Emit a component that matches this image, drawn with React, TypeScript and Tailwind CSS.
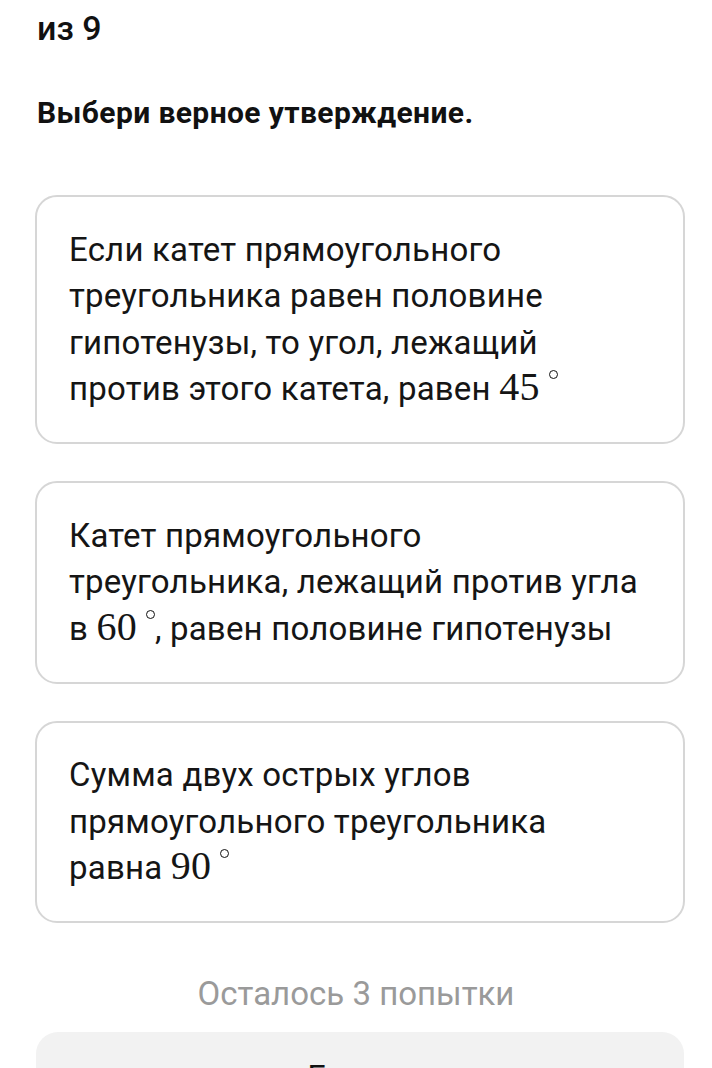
import React from "react";

function Deg() {
  return (
    <span className="inline-block w-[9px] h-[9px] rounded-full border-[1.5px] border-[#111] ml-[9px] relative top-[-21px]" />
  );
}

function M({ children }: { children: React.ReactNode }) {
  return (
    <span className="whitespace-nowrap">
      <span className="text-[40px] leading-[30px]" style={{ fontFamily: '"Liberation Serif", "DejaVu Serif", serif' }}>
        {children}
      </span>
      <Deg />
    </span>
  );
}

function Card({ children }: { children: React.ReactNode }) {
  return (
    <div className="rounded-[22px] border-2 border-[#d6d6d6] bg-white px-[32px] py-[29.5px] text-[33px] leading-[46.5px] tracking-[0.2px] text-[#151515]">
      {children}
    </div>
  );
}

export default function App() {
  return (
    <div
      className="w-[712px] h-[1068px] overflow-hidden bg-white text-[#111]"
      style={{ fontFamily: 'Roboto, "Noto Sans", sans-serif' }}
    >
      <div className="px-[37px] pt-[8px] text-[34px] leading-[40px] font-medium">из 9</div>
      <div className="px-[37px] mt-[47px] text-[30px] leading-[36px] font-bold tracking-[0.4px]">Выбери верное утверждение.</div>

      <div className="pl-[35px] pr-[27px] mt-[64px] flex flex-col gap-[37px]">
        <Card>
          <div>Если катет прямоугольного</div>
          <div>треугольника равен половине</div>
          <div>гипотенузы, то угол, лежащий</div>
          <div>
            против этого катета, равен <M>45</M>
          </div>
        </Card>
        <Card>
          <div>Катет прямоугольного</div>
          <div>треугольника, лежащий против угла</div>
          <div>
            в <M>60</M>, равен половине гипотенузы
          </div>
        </Card>
        <Card>
          <div>Сумма двух острых углов</div>
          <div>прямоугольного треугольника</div>
          <div>
            равна <M>90</M>
          </div>
        </Card>
      </div>

      <div className="mt-[51px] text-center text-[33px] leading-[40px] text-[#9a9a9a]">Осталось 3 попытки</div>

      <div className="ml-[36px] mr-[28px] mt-[18px] h-[110px] rounded-[22px] bg-[#f2f2f2] flex justify-center pt-[26px]">
        <span className="text-[33px] leading-[40px] text-[#111]">Готово</span>
      </div>
    </div>
  );
}
